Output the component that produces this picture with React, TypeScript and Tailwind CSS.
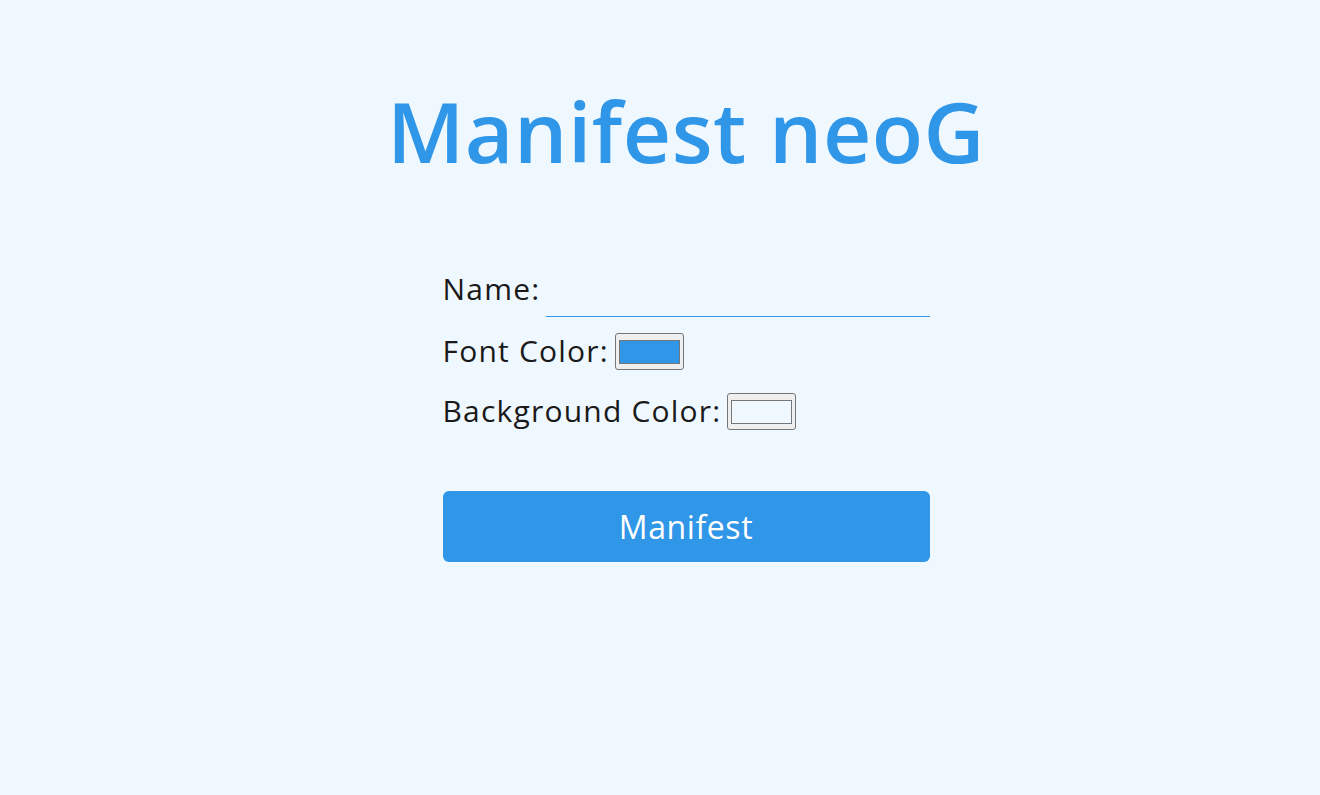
import React from "react";

function Swatch({ color }: { color: string }) {
  return (
    <div className="w-[69px] h-[37px] border border-[#767676] rounded-[3px] bg-[#efefef] pt-[6px] pb-[5px] px-[3px] flex">
      <div className="flex-1 border border-[#777777]" style={{ backgroundColor: color }} />
    </div>
  );
}

export default function App() {
  return (
    <div
      className="min-h-[795px] w-full bg-[#f0f8ff] flex flex-col items-center pl-[52px]"
      style={{ fontFamily: '"Open Sans", "Noto Sans", sans-serif' }}
    >
      <h1 className="mt-[76px] text-[84px] leading-[110px] font-semibold text-[#3096e8] tracking-[0.5px]">
        Manifest neoG
      </h1>
      <div className="mt-[75px] w-[487px] flex flex-col text-[#1a1a1a]">
        <div className="flex items-end h-[56px]">
          <label className="text-[30px] leading-[36px] mb-[10px] tracking-[1.2px]">Name:</label>
          <div className="ml-[6px] flex-1 flex flex-col h-[42px] justify-end">
            <div className="h-px bg-[#3096e8]" />
          </div>
        </div>
        <div className="flex items-center mt-[14px] h-[40px]">
          <span className="text-[30px] leading-[36px] tracking-[1.2px]">Font Color:</span>
          <div className="ml-[6px]">
            <Swatch color="#3096e8" />
          </div>
        </div>
        <div className="flex items-center mt-[20px] h-[40px]">
          <span className="text-[30px] leading-[36px] tracking-[1.2px]">Background Color:</span>
          <div className="ml-[6px]">
            <Swatch color="#f0f8ff" />
          </div>
        </div>
        <button className="mt-[60px] h-[71px] w-full rounded-[6px] bg-[#3096e8] text-white text-[32px] tracking-[0.6px]">
          Manifest
        </button>
      </div>
    </div>
  );
}
